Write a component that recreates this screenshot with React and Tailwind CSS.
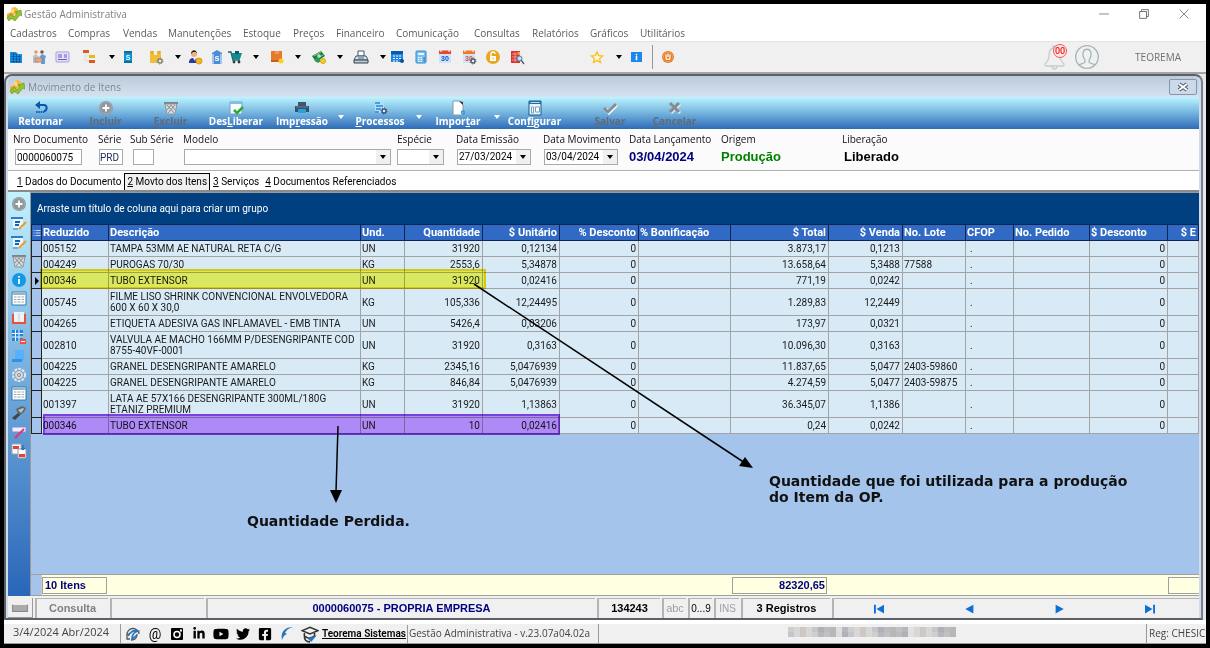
import { useState } from "react";
import { FaFacebookSquare, FaLinkedinIn, FaTwitter, FaYoutube } from "react-icons/fa";

const MENU = [
	["Cadastros", "w-[58px]"],
	["Compras", "w-[55px]"],
	["Vendas", "w-[45px]"],
	["Manutenções", "w-[75px]"],
	["Estoque", "w-[50px]"],
	["Preços", "w-[43px]"],
	["Financeiro", "w-[60px]"],
	["Comunicação", "w-[78px]"],
	["Consultas", "w-[58px]"],
	["Relatórios", "w-[58px]"],
	["Gráficos", "w-[50px]"],
	["Utilitários", "w-[60px]"],
];

const COLUMNS = [
	{ key: "reduzido", label: "Reduzido", width: "w-[67px]" },
	{ key: "descricao", label: "Descrição", width: "w-[252px]" },
	{ key: "und", label: "Und.", width: "w-[44px]" },
	{ key: "quantidade", label: "Quantidade", width: "w-[78px]", right: true },
	{ key: "unitario", label: "$ Unitário", width: "w-[77px]", right: true },
	{ key: "descPerc", label: "% Desconto", width: "w-[79px]", right: true },
	{ key: "bonif", label: "% Bonificação", width: "w-[92px]" },
	{ key: "total", label: "$ Total", width: "w-[98px]", right: true },
	{ key: "venda", label: "$ Venda", width: "w-[74px]", right: true },
	{ key: "lote", label: "No. Lote", width: "w-[63px]" },
	{ key: "cfop", label: "CFOP", width: "w-[48px]" },
	{ key: "pedido", label: "No. Pedido", width: "w-[76px]" },
	{ key: "desconto", label: "$ Desconto", width: "w-[78px]", rightBody: true },
	{ key: "extra", label: "$ E", width: "", right: true },
];

const item = (reduzido, descricao, und, quantidade, unitario, total, venda, lote = "") => ({
	reduzido, descricao, und, quantidade, unitario, descPerc: "0", total, venda, lote, cfop: ".", desconto: "0",
});

const ITEMS = [
	item("005152", ["TAMPA 53MM AE NATURAL RETA C/G"], "UN", "31920", "0,12134", "3.873,17", "0,1213"),
	item("004249", ["PUROGAS 70/30"], "KG", "2553,6", "5,34878", "13.658,64", "5,3488", "77588"),
	item("000346", ["TUBO EXTENSOR"], "UN", "31920", "0,02416", "771,19", "0,0242"),
	item("005745", ["FILME LISO SHRINK CONVENCIONAL ENVOLVEDORA", "600 X 60 X 30,0"], "KG", "105,336", "12,24495", "1.289,83", "12,2449"),
	item("004265", ["ETIQUETA ADESIVA GAS INFLAMAVEL - EMB TINTA"], "UN", "5426,4", "0,03206", "173,97", "0,0321"),
	item("002810", ["VALVULA AE MACHO 166MM P/DESENGRIPANTE COD", "8755-40VF-0001"], "UN", "31920", "0,3163", "10.096,30", "0,3163"),
	item("004225", ["GRANEL DESENGRIPANTE AMARELO"], "KG", "2345,16", "5,0476939", "11.837,65", "5,0477", "2403-59860"),
	item("004225", ["GRANEL DESENGRIPANTE AMARELO"], "KG", "846,84", "5,0476939", "4.274,59", "5,0477", "2403-59875"),
	item("001397", ["LATA AE 57X166 DESENGRIPANTE 300ML/180G", "ETANIZ PREMIUM"], "UN", "31920", "1,13863", "36.345,07", "1,1386"),
	item("000346", ["TUBO EXTENSOR"], "UN", "10", "0,02416", "0,24", "0,0242"),
];

const Svg = ({ children, className = "w-4 h-4" }) => (
	<svg viewBox="0 0 16 16" className={`${className} shrink-0`} fill="none" aria-hidden="true">{children}</svg>
);

const Logo = () => (
	<Svg>
		<path d="M5 2l4-1 3 2v4l-4 2-3-1z" fill="#f6b93c" />
		<path d="M5 2l3 1v5l-3-1z" fill="#fbd786" />
		<path d="M1 8l4-2 3 2-1 5-4 1-2-2z" fill="#f0a536" />
		<path d="M1 12l4-4 3 3 3-4-2-1 6-2 1 6-2-1-5 6-4-3-2 3z" fill="#8fc531" stroke="#5c9418" strokeWidth=".6" />
	</Svg>
);

const Caret = ({ className = "text-black" }) => (
	<svg viewBox="0 0 6 4" className={`w-[6px] h-1 shrink-0 ${className}`} aria-hidden="true">
		<path d="M0 0h6L3 4z" fill="currentColor" />
	</svg>
);

const Gear = ({ cx, cy, r = 2, color = "#56606b" }) => (
	<g>
		<circle cx={cx} cy={cy} r={r} stroke={color} strokeWidth="1.5" fill="#eee" />
		<circle cx={cx} cy={cy} r={r + 1} stroke={color} strokeWidth="1" strokeDasharray="1.2 1.1" />
	</g>
);

const CalendarArt = ({ top = "#e5482f", gear }) => (
	<Svg>
		<path d="M2 2h12v12H2z" fill="#cfe4fb" />
		<path d="M2 1.500h12V5H2z" fill={top} />
		<path d="M4 1v2M12 1v2" stroke="#fff" />
		<text x="8" y="12" textAnchor="middle" fontSize="7" fontWeight="bold" fontFamily="Liberation Sans, sans-serif" fill={gear ? "#d8502e" : "#1452b8"}>30</text>
		{gear && <Gear cx={12} cy={12} />}
	</Svg>
);

const ICONS = {
	building: <Svg><path d="M2 3h6l2 2h4v9H2z" fill="#1690e0" /><path d="M3 5h5M3 7.500h10M3 10h10M3 12.500h10M5.500 4v10M8.500 5v9M11.500 6v8" stroke="#0a569e" strokeWidth=".8" /></Svg>,
	people: <Svg><circle cx="5" cy="3" r="1.800" fill="#d9a26c" /><circle cx="11" cy="3" r="1.800" fill="#7a5a44" /><path d="M2 14V7l3-2 3 3v6z" fill="#b5c7c5" /><path d="M8 8l3-3 4 2-1 3v5h-4V9z" fill="#5d9ddd" /><path d="M4 9h7v4H4z" fill="#e7a58a" stroke="#b76b50" strokeWidth=".6" /></Svg>,
	card: <Svg><rect x="2" y="3" width="13" height="10" rx="1" fill="#e5e0fa" stroke="#a79be0" /><path d="M4 6h4M4 8h4M4 10.500h9M10 6h3M10 8h3" stroke="#6a5cc0" /></Svg>,
	tree: <Svg><path d="M3 3v9h6M3 7h5" stroke="#ddd" /><path d="M1 1h6v3H1z" fill="#dd5a22" /><path d="M7 6h6v3H7z" fill="#efb51a" /><path d="M7 11h6v3H7z" fill="#dd5a22" /></Svg>,
	phone: <Svg><path d="M4 2h8v12H4z" fill="#0c93cf" /><path d="M4 2h8v2H4zM4 12h8v2H4z" fill="#0a6ca8" /><text x="8" y="11" textAnchor="middle" fontSize="7" fontWeight="bold" fontFamily="Liberation Sans, sans-serif" fill="#fff">S</text></Svg>,
	boxes: <Svg><path d="M2 2h4v4h3V2h4v12H2z" fill="#f2bd3a" /><path d="M4 2v3M11 2v3" stroke="#d99a1c" /><Gear cx={12} cy={12} color="#8a8577" /></Svg>,
	user: <Svg><circle cx="7" cy="5" r="3" fill="#f0b07a" /><path d="M4 5c0-5 6-5 6 0L9 3H6z" fill="#222" /><path d="M2 14c0-5 3-5 5-5s5 1 5 5z" fill="#2a3a9c" /><path d="M6 9h3l-1 3z" fill="#eee" /><circle cx="12" cy="12" r="3" fill="#f3b61f" stroke="#df9710" /></Svg>,
	bank: <Svg><path d="M3 4l5-3 5 3v11H3z" fill="#4c8cd6" /><path d="M3 5h2v10H3zM11 5h2v10h-2z" fill="#9cc5ef" /><text x="8" y="12" textAnchor="middle" fontSize="9" fontWeight="bold" fontFamily="Liberation Sans, sans-serif" fill="#fff">s</text></Svg>,
	cart: <Svg><path d="M1 3h3l2 8h7" stroke="#14676c" strokeWidth="1.500" /><path d="M4 4h11l-2 6H6z" fill="#148c8e" /><path d="M8 2h4v3H8z" fill="#0e5b66" /><circle cx="7" cy="13" r="1.400" fill="#334" /><circle cx="12" cy="13" r="1.400" fill="#334" /></Svg>,
	orangeBox: <Svg><path d="M2 2h11v11H2z" fill="#e57a2d" /><path d="M6 2h4v3H6z" fill="#f09a56" /><path d="M2 11h10v2H2z" fill="#c8601c" /><circle cx="12" cy="12" r="2.500" fill="#fcd21c" /></Svg>,
	money: <Svg><path d="M1 7l9-5 4 5-9 6z" fill="#1c7f3c" /><path d="M3 7l7-4M5 10l7-4" stroke="#8ed49a" /><circle cx="8" cy="7" r="1.800" fill="#bfe6c0" /><path d="M3 11l4 3 3-2-3-4z" fill="#2e9a50" /><circle cx="12" cy="12" r="2.500" fill="#f5cf2b" stroke="#d8a715" /></Svg>,
	register: <Svg><path d="M5 2h6v5H5z" fill="#fff" stroke="#456" /><path d="M3 7h10l2 4H1z" fill="#dfe5ea" stroke="#456" /><path d="M1 11h14v3H1z" fill="#c0c8ce" stroke="#345" /><path d="M5 9h6" stroke="#286fae" /></Svg>,
	calendarBlue: <Svg><path d="M2 2h12v11H2z" fill="#1c86e0" /><path d="M2 2h12v3H2z" fill="#0b5aa6" /><path d="M4 7h8M4 9.500h8M4 12h5" stroke="#fff" strokeDasharray="2 1" /><circle cx="13" cy="12" r="2" fill="#114e91" /></Svg>,
	calculator: <Svg><rect x="3" y="2" width="10" height="12" rx="1" fill="#79c0ee" stroke="#2d8acb" /><path d="M5 4h6v2H5z" fill="#eaf6ff" /><path d="M5 8.500h6M5 10.500h6M5 12.500h6" stroke="#fff" strokeDasharray="1.500 1" /><path d="M11 8v5" stroke="#1063ad" /></Svg>,
	calendar: <CalendarArt />,
	calendarGear: <CalendarArt top="#ee7a28" gear />,
	lock: <Svg><circle cx="8" cy="8" r="7" fill="#e9a81c" /><path d="M5 7h6v5H5z" fill="#fff" /><path d="M6 7V5a2 2 0 014 0" stroke="#fff" strokeWidth="1.300" /><path d="M8 8.500v2" stroke="#e9a81c" /></Svg>,
	report: <Svg><path d="M2 2h9v12H2z" fill="#d93434" /><path d="M3 5h7M3 8h7M3 11h7M6 3v10" stroke="#f5a9a0" strokeWidth=".8" /><path d="M8 3h3v4z" fill="#f4b128" /><circle cx="10.500" cy="9.500" r="2.500" fill="#bfe1fb" stroke="#3f7cb8" /><path d="M12 11l3 4" stroke="#555" strokeWidth="1.300" /></Svg>,
	star: <Svg><path d="M8 3l1.600 3.600 4 .4-3 2.600.9 3.900L8 11.500l-3.500 2 .9-3.900-3-2.600 4-.4z" fill="#fff8d8" stroke="#fbbc14" strokeWidth="1.200" /></Svg>,
	info: <Svg><path d="M3 3h11v10H3z" fill="#1b87e8" /><path d="M8 5h1v1H8zM8 7h1v4H8z" fill="#fff" stroke="#fff" strokeWidth=".6" /></Svg>,
	power: <Svg><circle cx="8" cy="8" r="6" fill="#e67a21" /><circle cx="8" cy="8" r="4.700" stroke="#f5b47d" strokeWidth=".6" /><path d="M6 5.500v3a2 2 0 004 0v-3M8 4.500V8" stroke="#fff" strokeWidth="1.200" /></Svg>,

	undo: <Svg><path d="M2 5l5-4v8z" fill="#0b55b0" /><path d="M6 5h5c3 0 4 5 0 6.500" stroke="#0b55b0" strokeWidth="2" /><path d="M3 12h8" stroke="#0b62c0" strokeWidth="2" strokeDasharray="1.500 .8" /></Svg>,
	plus: <Svg><circle cx="8" cy="8" r="7" fill="#8f979b" /><circle cx="8" cy="8" r="6" stroke="#a5acb0" /><path d="M8 4.500v7M4.500 8h7" stroke="#fff" strokeWidth="1.800" /></Svg>,
	trash: <Svg><path d="M1 3h14" stroke="#7d858b" strokeWidth="2" /><path d="M2 4h12l-2 10H4z" fill="#d9dcde" stroke="#8d9499" /><path d="M4 5l7 8M8 5l4 5M12 5l-7 8M8 5l-4 5" stroke="#858c92" /></Svg>,
	check: <Svg><path d="M2 2h12v12H2z" fill="#f4fbff" stroke="#6e9fd6" /><path d="M2 2h12v2H2z" fill="#8bb8e6" /><path d="M6 10l3 3 6-6" stroke="#35a72b" strokeWidth="2.600" /></Svg>,
	printer: <Svg><path d="M4 2h8v4H4z" fill="#41566b" /><path d="M1 6h14v6H1z" fill="#34506a" /><path d="M4 9h8v4H4z" fill="#29a3d5" /><path d="M2 7h12" stroke="#6c8398" /></Svg>,
	process: <Svg><path d="M3 2h7l2 2v9H3z" fill="#b8dcf8" /><path d="M3 3h5M4 6h7M4 9h5M3 12h4" stroke="#2387d8" strokeWidth="1.500" /><Gear cx={12} cy={11} color="#36577a" /></Svg>,
	importDoc: <Svg><path d="M3 1h7l3 4v10H3z" fill="#fff" stroke="#8797a6" /><path d="M9 1l4 4V2z" fill="#333" /><circle cx="13" cy="12.500" r="1.500" stroke="#3a9be0" strokeWidth="1.500" /></Svg>,
	config: <Svg><path d="M2 1h12v14H2z" fill="#e6f4ff" stroke="#155a92" /><path d="M2 1h12v3H2z" fill="#256da5" /><path d="M3.500 2.500h9" stroke="#e6f4ff" strokeWidth=".8" /><path d="M4.500 7h2v6h-2zM8.500 7h4v5h-4z" stroke="#7f9db6" fill="#fff" /></Svg>,
	save: <Svg><path d="M4 9l3 4 8-8" stroke="#eef6fb" strokeWidth="3" /><path d="M2 8l4 4 8-8" stroke="#858b90" strokeWidth="2.600" /></Svg>,
	cancel: <Svg><path d="M4 4l9 9M13 4l-9 9" stroke="#e5eef4" strokeWidth="3" /><path d="M3 3l9 9M12 3l-9 9" stroke="#858b90" strokeWidth="3" /></Svg>,

	edit: <Svg><path d="M0 2h12v2H0z" fill="#2d7dcc" /><path d="M2 4h10v9H2z" fill="#e9f5ff" /><path d="M4 7h5M4 10h4" stroke="#1661b4" strokeWidth="1.800" /><path d="M8 14l7-7" stroke="#f09a26" strokeWidth="2" /><path d="M2 14h5" stroke="#2d7dcc" /></Svg>,
	infoRound: <Svg><circle cx="8" cy="8" r="7" fill="#1497e5" /><path d="M8 7v5M8 4v1.500" stroke="#fff" strokeWidth="1.800" /></Svg>,
	grid: <Svg><path d="M1 1h14v13H1z" fill="#fff" stroke="#2f7ead" /><path d="M2 2h12v2H2z" fill="#9db4c0" /><path d="M3 6h10M3 8.500h10M3 11h10" stroke="#9aa7ae" /><path d="M6 5v8M10 5v8" stroke="#fff" /></Svg>,
	book: <Svg><path d="M1 4h14v10H1z" fill="#e8513b" /><path d="M3 2h5v10H3zM8 2h5v10H8z" fill="#eef3f8" /><path d="M8 3v9" stroke="#c2ccd4" /></Svg>,
	gridLock: <Svg><path d="M1 1h11v11H1z" fill="#2b83d6" /><path d="M1 4.500h11M1 8h11M4.500 1v11M8 1v11" stroke="#e8f4ff" /><path d="M9 10h6v5H9z" fill="#ea5136" /><path d="M10 12.500h4" stroke="#fff" /></Svg>,
	page: <Svg><path d="M4 2h9v11H4z" fill="#55b1fa" /><path d="M1 11h10v3H1z" fill="#2c92ec" /></Svg>,
	gear: <Svg><circle cx="8" cy="8" r="5.500" stroke="#e3e8ec" strokeWidth="3" strokeDasharray="2.500 1" /><circle cx="8" cy="8" r="4.500" fill="#cfd8de" stroke="#8b98a2" /><path d="M5 8h6M8 5v6" stroke="#eef2f5" /><circle cx="8" cy="8" r="1.500" stroke="#7b8892" /></Svg>,
	scanner: <Svg><path d="M5 4l6-3 4 2-2 4-5 4z" fill="#5d6668" /><path d="M7 5l5-2 1 1-3 4z" fill="#b8c4c4" /><path d="M1 13l6-5 2 2-5 5z" fill="#3d474b" /></Svg>,
	wand: <Svg><path d="M1 3h14v5H1z" fill="#eef1fb" stroke="#8588d8" /><path d="M4 14l9-9" stroke="#e6346c" strokeWidth="2" /></Svg>,
	transfer: <Svg><path d="M1 1h9v10H1z" fill="#fff" stroke="#9aa" /><path d="M2 3h6v3H2z" fill="#e44040" /><path d="M7 6h8v9H7z" fill="#fff" stroke="#99a" /><path d="M8 11h6v3H8z" fill="#e44040" /><path d="M12 2v5l-2-2M12 7l2-2" stroke="#1b5fb5" /></Svg>,
};

const TOP_BAR = [
	["building", "Empresas", "w-[23px]"],
	["people", "Clientes", "w-[23px]"],
	["card", "Cartões", "w-[23px]"],
	["tree", "Plano", "w-[34px]"],
	["caret", "Mais plano", "w-[9px]"],
	["phone", "Vendas", "w-6"],
	["boxes", "Estoque", "w-8"],
	["caret", "Mais estoque", "w-[11px]"],
	["user", "Vendedor", "w-6"],
	["bank", "Banco", "w-5"],
	["cart", "Compras", "w-4"],
	["caret", "Mais compras", "w-[26px]"],
	["orangeBox", "Produtos", "w-4"],
	["caret", "Mais produtos", "w-[26px]"],
	["money", "Financeiro", "w-4"],
	["caret", "Mais financeiro", "w-[26px]"],
	["register", "Caixa", "w-4"],
	["caret", "Mais caixa", "w-5 pl-2"],
];

const RECORD_BAR = [
	{ icon: "undo", label: "Retornar", width: "w-[65px]" },
	{ icon: "plus", label: "Incluir", width: "w-[65px]", hot: "I", disabled: true },
	{ icon: "trash", label: "Excluir", width: "w-[65px]", hot: "E", disabled: true },
	{ icon: "check", label: "DesLiberar", width: "w-[66px]", hot: "L" },
	{ icon: "printer", label: "Impressão", width: "w-[66px]", hot: "r", menu: true },
	{ icon: "process", label: "Processos", width: "w-[66px]", hot: "P", menu: true },
	{ icon: "importDoc", label: "Importar", width: "w-[66px]", hot: "t", menu: true },
	{ icon: "config", label: "Configurar", width: "w-[63px]", hot: "f" },
	{ icon: "save", label: "Salvar", width: "w-[64px] ml-3", hot: "S", disabled: true },
	{ icon: "cancel", label: "Cancelar", width: "w-[65px]", hot: "C", disabled: true },
];

const SIDE_BAR = [
	["plus", "Incluir item"], ["edit", "Editar item"], ["edit", "Alterar item"], ["trash", "Excluir item"],
	["infoRound", "Informações"], ["grid", "Grade"], ["book", "Livro"], ["gridLock", "Bloquear"],
	["page", "Página"], ["gear", "Opções"], ["grid", "Tabela"], ["scanner", "Coletor"],
	["wand", "Ajustar"], ["transfer", "Transferir"],
];

const TABS = ["Dados do Documento", "Movto dos Itens", "Serviços", "Documentos Referenciados"];

const PIXELS = ["#c9c5c2", "#aaa9ab", "#b9bcc2", "#d4d0cd", "#b4b6ba", "#9fa2a8", "#c5bfba", "#a7abb2", "#b2aeb0", "#d0d2d6"];

function HotLabel({ text, hot }) {
	const at = hot ? text.indexOf(hot) : -1;
	if (at < 0) return text;
	return <>{text.slice(0, at)}<u>{hot}</u>{text.slice(at + 1)}</>;
}

function TitleBar() {
	return (
		<header className="bg-white text-[#808080] font-['Open_Sans',sans-serif]">
			<div className="flex items-center h-5 pl-[2px]">
				<Logo />
				<h1 className="ml-[2px] text-[10px]">Gestão Administrativa</h1>
				<div className="ml-auto flex items-center gap-[30px] pr-[17px]">
					<button aria-label="Minimizar"><Svg className="w-[10px] h-[10px]"><path d="M0 8h16" stroke="#888" strokeWidth="1.600" /></Svg></button>
					<button aria-label="Restaurar"><Svg className="w-[10px] h-[10px]"><path d="M1 4h11v11H1zM4 4V1h11v11h-3" stroke="#777" strokeWidth="1.600" /></Svg></button>
					<button aria-label="Fechar"><Svg className="w-[10px] h-[10px]"><path d="M1 1l14 14M15 1L1 15" stroke="#888" strokeWidth="1.600" /></Svg></button>
				</div>
			</div>
			<nav className="flex h-[17px] items-center pl-[6px] text-[10px] text-[#5c5c5c]">
				{MENU.map(([label, width]) => (
					<button key={label} className={`${width} shrink-0 text-left whitespace-nowrap`}>{label}</button>
				))}
			</nav>
		</header>
	);
}

function ToolButton({ icon, label, width = "w-4" }) {
	return (
		<button aria-label={label} className={`${width} shrink-0 flex items-center justify-center`}>
			{icon === "caret" ? <Caret /> : ICONS[icon]}
		</button>
	);
}

function TopBar() {
	return (
		<div className="flex items-center h-[31px] bg-[#f0f0f0] border-t border-[#e4e4e4]">
			{TOP_BAR.map(([icon, label, width]) => <ToolButton key={label} icon={icon} label={label} width={width} />)}
			<div className="flex gap-2">
				<ToolButton icon="calendarBlue" label="Agenda" />
				<ToolButton icon="calculator" label="Calculadora" />
				<ToolButton icon="calendar" label="Calendário" />
				<ToolButton icon="calendarGear" label="Configurar calendário" />
				<ToolButton icon="lock" label="Bloquear sistema" />
				<ToolButton icon="report" label="Consultar relatório" />
			</div>
			<div className="flex items-center ml-16">
				<ToolButton icon="star" label="Favoritos" />
				<ToolButton icon="caret" label="Mais favoritos" width="w-[23px] pl-1" />
				<ToolButton icon="info" label="Informação" />
			</div>
			<span className="w-px h-6 ml-2 bg-[#999]" />
			<div className="ml-[7px]"><ToolButton icon="power" label="Sair" /></div>
			<div className="ml-auto flex items-center">
				<button aria-label="Notificações" className="relative">
					<svg viewBox="0 0 24 26" className="w-6 h-[26px]" fill="none" stroke="#c6cccc" strokeWidth="1.300" aria-hidden="true">
						<path d="M11 4C7 4 6 8 6 12c0 4-2 6-4 8 0 2 0 2 2 2h15c2 0 2 0 2-2-2-2-4-4-4-8 0-4-2-8-6-8zM10 4V2h3v2M9 22c0 4 5 4 5 0" />
					</svg>
					<span className="absolute top-0 right-0 w-[14px] h-[14px] rounded-full border border-[#ea5a4f] bg-[#fdeaea] text-[9px] leading-3 text-[#f01818] text-center font-medium">00</span>
				</button>
				<button aria-label="Perfil" className="ml-[7px]">
					<svg viewBox="0 0 26 26" className="w-[26px] h-[26px]" fill="none" stroke="#a3b5b8" strokeWidth="1.300" aria-hidden="true">
						<circle cx="13" cy="13" r="11.300" />
						<path d="M5 21c2-2 5-1 6-3s-3-5-2-9c1-5 7-5 8 0 1 4-3 7-2 9s4 1 6 3" />
					</svg>
				</button>
				<span className="ml-[35px] mr-[25px] text-[10px] text-[#707070] font-['Open_Sans',sans-serif]">TEOREMA</span>
			</div>
		</div>
	);
}

function RecordBar() {
	return (
		<div className="flex h-8 bg-linear-to-b from-[#bdf5ff] via-[#74b3de] to-[#2f6bb8] font-['Open_Sans',sans-serif]">
			{RECORD_BAR.map(({ icon, label, width, hot, disabled, menu }) => (
				<div key={label} className="flex shrink-0">
					<button disabled={disabled} className={`${width} flex flex-col items-center pt-[3px]`}>
						{ICONS[icon]}
						<span className={`text-[10px] leading-[11px] font-bold whitespace-nowrap ${disabled ? "text-[#5f6b78]" : "text-white"}`}>
							<HotLabel text={label} hot={hot} />
						</span>
					</button>
					{menu && (
						<button aria-label={`Opções de ${label}`} className="w-3 flex items-center justify-center pt-2">
							<Caret className="text-white" />
						</button>
					)}
				</div>
			))}
		</div>
	);
}

const box = "h-4 border border-[#a9a9a9] bg-white text-[10px] leading-[14px]";

function Field({ id, label, width, children }) {
	return (
		<div className={`${width} shrink-0`}>
			<label htmlFor={id} className="block pt-[2px] h-5 text-[10px] leading-4 whitespace-nowrap text-[#111] font-['Open_Sans',sans-serif]">{label}</label>
			{children}
		</div>
	);
}

function Combo({ id, width }) {
	return (
		<div className={`relative ${width}`}>
			<select id={id} className={`${box} w-full appearance-none block`}><option></option></select>
			<span className="absolute right-px top-px h-[14px] w-[14px] bg-[#f0f0f0] flex items-center justify-center pointer-events-none"><Caret /></span>
		</div>
	);
}

function DateBox({ id, value }) {
	return (
		<div className={`${box} flex w-[74px] ml-px`}>
			<input id={id} defaultValue={value} className="w-[58px] h-[14px] pl-px" />
			<button aria-label="Abrir calendário" className="w-[14px] h-[14px] bg-[#f0f0f0] flex items-center justify-center"><Caret /></button>
		</div>
	);
}

function DocumentForm() {
	return (
		<form className="flex h-[42px] pl-[5px] bg-[#fbfbfb] border-b border-[#b0b0b0]">
			<Field id="nro" label="Nro Documento" width="w-[85px]">
				<input id="nro" defaultValue="0000060075" className={`${box} block w-[67px] ml-[2px] px-px`} />
			</Field>
			<Field id="serie" label="Série" width="w-8">
				<input id="serie" defaultValue="PRD" className={`${box} block w-6 ml-px text-[#1c2a5c]`} />
			</Field>
			<Field id="sub" label="Sub Série" width="w-[53px]">
				<input id="sub" className={`${box} block w-[21px] ml-[3px]`} />
			</Field>
			<Field id="modelo" label="Modelo" width="w-[214px]"><Combo id="modelo" width="w-[207px] ml-px" /></Field>
			<Field id="especie" label="Espécie" width="w-[59px]"><Combo id="especie" width="w-[47px]" /></Field>
			<Field id="emissao" label="Data Emissão" width="w-[87px]"><DateBox id="emissao" value="27/03/2024" /></Field>
			<Field id="movimento" label="Data Movimento" width="w-[86px]"><DateBox id="movimento" value="03/04/2024" /></Field>
			<Field id="lancamento" label="Data Lançamento" width="w-[92px]">
				<output id="lancamento" className="block text-[13px] leading-4 font-bold text-[#000080] font-['Liberation_Sans',sans-serif]">03/04/2024</output>
			</Field>
			<Field id="origem" label="Origem" width="w-[121px]">
				<output id="origem" className="block text-[13px] leading-4 font-bold text-[#008000] font-['Liberation_Sans',sans-serif]">Produção</output>
			</Field>
			<Field id="liberacao" label="Liberação" width="w-[80px]">
				<output id="liberacao" className="block pl-[2px] text-[13px] leading-4 font-bold text-black font-['Liberation_Sans',sans-serif]">Liberado</output>
			</Field>
		</form>
	);
}

function Tabs() {
	const [active, setActive] = useState(1);
	return (
		<div role="tablist" className="flex h-[21px] pt-[2px] pl-[6px] bg-white border-b-2 border-[#8a8a8a] text-[10px]">
			{TABS.map((tab, i) => (
				<button
					key={tab}
					role="tab"
					aria-selected={i === active}
					onClick={() => setActive(i)}
					className={i === active
						? "px-[2px] bg-[#f0f0f0] border border-b-0 border-black whitespace-nowrap"
						: "px-[3px] pt-px whitespace-nowrap"}
				>
					<u>{i + 1}</u> {tab}
				</button>
			))}
		</div>
	);
}

function ItemsTable() {
	return (
		<table className="w-full table-fixed border-collapse text-[10px] leading-[11px] text-[#1a1a1a]">
			<colgroup>
				<col className="w-[10px]" />
				{COLUMNS.map((c) => <col key={c.key} className={c.width} />)}
			</colgroup>
			<thead>
				<tr className="h-4 bg-[#316ac5] text-white text-[11px]">
					<th aria-label="Indicador" className="border border-[#10254d] p-0">
						<Svg className="w-2 h-3 mx-auto"><path d="M1 3h2M5 3h10M1 8h2M5 8h10M1 13h2M5 13h10" stroke="#fff" strokeWidth="1.500" /></Svg>
					</th>
					{COLUMNS.map((c) => (
						<th key={c.key} className={`border border-[#10254d] pl-px pr-[2px] py-0 whitespace-nowrap overflow-hidden ${c.right ? "text-right" : "text-left"}`}>{c.label}</th>
					))}
				</tr>
			</thead>
			<tbody>
				{ITEMS.map((row, i) => (
					<tr key={i} className={row.descricao.length > 1 ? "h-[27px]" : "h-4"}>
						<td className="bg-[#a5c4ec] border border-[#222] p-0">
							{i === 2 && <svg viewBox="0 0 4 8" className="w-1 h-2 mx-auto" aria-hidden="true"><path d="M0 0l4 4-4 4z" /></svg>}
						</td>
						{COLUMNS.map((c) => (
							<td key={c.key} className={`bg-[#d8eaf6] border border-[#a3a3a3] pr-[2px] py-0 whitespace-nowrap ${c.right || c.rightBody ? "text-right" : "text-left"} ${c.key === "cfop" ? "pl-1" : "pl-px"}`}>
								{c.key === "descricao" ? row.descricao.map((line) => <div key={line}>{line}</div>) : row[c.key]}
							</td>
						))}
					</tr>
				))}
			</tbody>
		</table>
	);
}

// notes drawn over the grid, positions are relative to the grid panel
function Annotations() {
	return (
		<>
			<div className="absolute left-[9px] top-[76px] w-[446px] h-5 border-2 border-[#fdda15] bg-[#fffd63] mix-blend-multiply pointer-events-none" />
			<div className="absolute left-[12px] top-[221px] w-[517px] h-[21px] border-2 border-[#8e46e8] bg-[#cd96fe] mix-blend-multiply pointer-events-none" />
			<div className="absolute inset-0 overflow-hidden pointer-events-none font-['DejaVu_Sans',sans-serif] text-[14px] leading-4 font-bold text-[#111]">
				<svg className="absolute left-0 top-0 w-[800px] h-[330px]" viewBox="0 0 800 330" aria-hidden="true">
					<path d="M443 91L714 270" stroke="#000" strokeWidth="1.500" />
					<path d="M722 275l-14-2 6-9z" />
					<path d="M307 233l-2 66" stroke="#000" strokeWidth="1.500" />
					<path d="M305 310l-6-13h12z" />
				</svg>
				<p className="absolute left-[216px] top-[320px] whitespace-nowrap">Quantidade Perdida.</p>
				<p className="absolute left-[738px] top-[280px] whitespace-nowrap">Quantidade que foi utilizada para a produção<br />do Item da OP.</p>
			</div>
		</>
	);
}

function GridPanel() {
	return (
		<main className="relative flex-1 min-w-0 flex flex-col border-l border-t border-[#9a9a9a] bg-[#a5c4ec]">
			<div className="h-[31px] flex items-center pl-[6px] bg-[#004080] text-[10px] text-white">Arraste um título de coluna aqui para criar um grupo</div>
			<ItemsTable />
			<div className="flex-1" />
			<div className="flex h-[22px] items-center border-y border-[#a0a0a0] text-[11px] font-bold text-[#000080] font-['Liberation_Sans',sans-serif]">
				<span className="w-[10px] h-full shrink-0" />
				<div className="flex flex-1 items-center h-full bg-[#ffffe1] border-l border-[#ccc]">
					<span className="w-[65px] h-[17px] leading-[15px] border border-[#a0a0a0] pl-[2px]">10 Itens</span>
					<span className="ml-[625px] w-[95px] h-[17px] leading-[15px] border border-[#a0a0a0] pr-px text-right">82320,65</span>
					<span className="ml-auto w-[31px] h-[17px] border border-r-0 border-[#a0a0a0]" />
				</div>
			</div>
			<Annotations />
		</main>
	);
}

const panel = "h-5 shrink-0 border-l-2 border-t border-[#b4b4b4] flex items-center justify-center";

function RecordStatus() {
	return (
		<div className="flex h-[22px] pt-[2px] gap-[2px] bg-[#f0f0f0] font-['Liberation_Sans',sans-serif] text-[11px] font-bold">
			<button aria-label="Teclado" className="w-[25px] border-r border-b border-[#999] flex items-center justify-center">
				<span className="w-4 h-2 bg-[#aaa] border border-[#888] border-t-[#eee]" />
			</button>
			<span className={`${panel} w-[73px] text-[#808080]`}>Consulta</span>
			<span className={`${panel} w-[94px]`} />
			<span className={`${panel} w-[389px] text-[#000080]`}>0000060075 - PROPRIA EMPRESA</span>
			<span className={`${panel} w-[63px]`}>134243</span>
			<span className={`${panel} w-6 font-normal text-[#a0a0a0]`}>abc</span>
			<span className={`${panel} w-6 font-normal text-[10px]`}>0...9</span>
			<span className={`${panel} w-[25px] font-normal text-[10px] text-[#a0a0a0]`}>INS</span>
			<span className={`${panel} w-[89px]`}>3 Registros</span>
			<div className="flex-1 h-5 border-l-2 border-t border-[#b4b4b4] flex items-center justify-around pr-1">
				<button aria-label="Primeiro"><Svg className="w-[10px] h-[10px]"><path d="M0 1h3v14H0zM16 1v14L4 8z" fill="#0f6fd8" /></Svg></button>
				<button aria-label="Anterior"><Svg className="w-[10px] h-[10px]"><path d="M15 1v14L2 8z" fill="#0f6fd8" /></Svg></button>
				<button aria-label="Próximo"><Svg className="w-[10px] h-[10px]"><path d="M1 1v14l13-7z" fill="#0f6fd8" /></Svg></button>
				<button aria-label="Último"><Svg className="w-[10px] h-[10px]"><path d="M13 1h3v14h-3zM0 1v14l12-7z" fill="#0f6fd8" /></Svg></button>
			</div>
		</div>
	);
}

function Footer() {
	return (
		<footer className="flex items-stretch h-5 mt-1 bg-[#f0f0f0] border-b border-[#999] text-[10px] text-[#444] whitespace-nowrap overflow-hidden font-['Open_Sans',sans-serif]">
			<span className="w-[117px] shrink-0 pl-[9px] leading-4 border-r border-[#999] text-[11px]">3/4/2024 Abr/2024</span>
			<div className="flex items-center shrink-0 pl-1 text-black">
				<div className="flex items-center gap-[6px]">
					<a href="#site" aria-label="Suporte"><Svg><path d="M2 9a6 6 0 0112-1M4 8l-2 1v4h3M12 8c0 4-2 6-6 6" stroke="#555" strokeWidth="1.300" /><path d="M3 10c3-5 7-6 10-5-4 1-6 4-6 8l5-4" stroke="#2574bd" strokeWidth="1.600" /></Svg></a>
					<a href="#email" aria-label="E-mail" className="w-4 text-[14px] leading-4 text-center font-['Roboto',sans-serif]">@</a>
					<a href="#instagram" aria-label="Instagram">
						<Svg><rect x="2" y="2" width="12" height="12" rx="1" fill="#000" /><circle cx="8" cy="8.500" r="3" stroke="#fff" strokeWidth="1.500" /><path d="M11 3.500h2v2h-2z" fill="#fff" /></Svg>
					</a>
					<a href="#linkedin" aria-label="LinkedIn"><FaLinkedinIn className="w-4 h-[13px]" /></a>
					<a href="#youtube" aria-label="YouTube"><FaYoutube className="w-4 h-4" /></a>
					<a href="#twitter" aria-label="Twitter"><FaTwitter className="w-4 h-[14px]" /></a>
					<a href="#facebook" aria-label="Facebook"><FaFacebookSquare className="w-4 h-[14px]" /></a>
					<a href="#blog" aria-label="Blog"><Svg><path d="M14 1C7 1 1 5 3 14c1-3 2-5 5-6L6 7c2-4 5-5 8-6z" fill="#2574bd" /></Svg></a>
				</div>
				<a href="#teorema" className="flex items-center ml-[6px] text-black underline font-semibold pr-px border-r border-[#999] font-['Roboto',sans-serif]">
					<Svg className="w-[18px] h-[18px] mr-[3px]"><path d="M1 5l7-3 7 3-7 3zM3 7v3l4 2 5-2V6M3 10c0 4 3 5 5 5" stroke="#333" strokeWidth="1.400" /><path d="M6 12l8-3-5 6z" fill="#2574bd" /></Svg>
					Teorema Sistemas
				</a>
			</div>
			<span className="w-[191px] shrink-0 pl-px leading-[18px] border-r border-[#999]">Gestão Administrativa - v.23.07a04.02a</span>
			<div className="flex-1 flex justify-center pt-[3px]">
				<svg viewBox="0 0 168 11" className="w-[168px] h-[11px]" aria-hidden="true">
					{Array.from({ length: 28 }, (_, i) => (
						<g key={i} opacity={i === 8 || i === 20 ? 0.3 : 0.8}>
							<rect x={i * 6} y="0" width="6" height="6" fill={PIXELS[(i * 3) % 10]} />
							<rect x={i * 6} y="5" width="6" height="5" fill={PIXELS[(i * 7 + 2) % 10]} />
						</g>
					))}
				</svg>
			</div>
			<span className="w-[60px] shrink-0 pl-[2px] leading-[18px] border-l border-[#999]">Reg: CHESIC</span>
		</footer>
	);
}

export default function App() {
	return (
		<div className="min-h-screen w-full flex flex-col overflow-hidden border-4 border-black bg-white font-['Roboto','Noto_Sans',sans-serif] leading-none">
			<TitleBar />
			<TopBar />
			<section className="flex-1 flex flex-col border-t-2 border-[#a5a5a5] bg-[#e6e8ee]">
				<div className="flex-1 flex flex-col rounded-t-lg border-2 border-[#5c6068] border-r-[#7b7f88] mr-[3px] pl-[2px] pr-[2px] bg-[#cfdceb]">
					<div className="flex items-center h-[21px] rounded-t-md bg-linear-to-b from-[#bccbdb] to-[#d5e2f0] pl-px">
						<Logo />
						<h2 className="ml-[3px] text-[10px] text-[#808890] font-['Open_Sans',sans-serif]">Movimento de Itens</h2>
						<button aria-label="Fechar janela" className="ml-auto mr-[2px] w-7 h-4 border border-[#8695ab] rounded-xs bg-[#cbd9e8] flex items-center justify-center">
							<svg viewBox="0 0 12 10" className="w-3 h-[10px]" fill="none" aria-hidden="true"><path d="M2 2l8 6M10 2L2 8" stroke="#4b5567" strokeWidth="4" /><path d="M2 2l8 6M10 2L2 8" stroke="#fff" strokeWidth="2" /></svg>
						</button>
					</div>
					<RecordBar />
					<DocumentForm />
					<Tabs />
					<div className="flex-1 flex">
						<aside className="w-[22px] shrink-0 flex flex-col items-center gap-[5px] pt-[5px] bg-linear-to-b from-[#c3f1fc] via-[#6da6d9] to-[#2a66b8]">
							{SIDE_BAR.map(([icon, label]) => (
								<button key={label} aria-label={label} className="flex">
									<span className="flex w-[14px] h-[14px] justify-center items-center">{ICONS[icon]}</span>
								</button>
							))}
						</aside>
						<GridPanel />
					</div>
					<RecordStatus />
				</div>
			</section>
			<Footer />
		</div>
	);
}
